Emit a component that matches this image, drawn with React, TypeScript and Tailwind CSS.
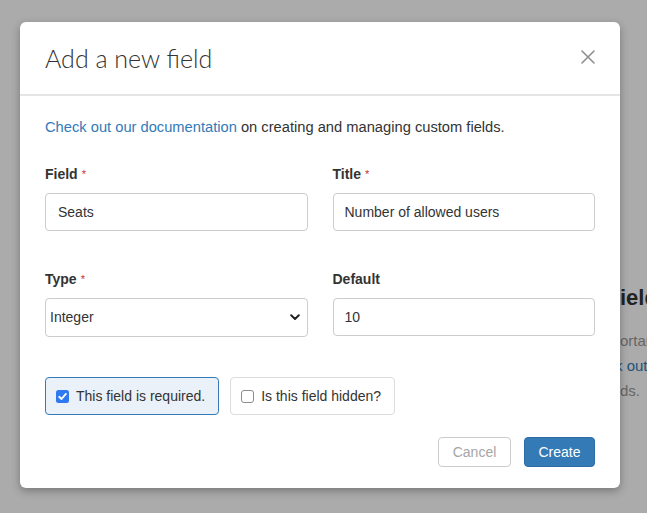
import { useState } from "react";

const Req = () => <span className="ml-[4px] text-[11px] align-top text-[#c9302c] font-normal">*</span>;

function CheckBox({ checked }: { checked: boolean }) {
  if (checked) {
    return (
      <svg width="13" height="13" viewBox="0 0 13 13" className="shrink-0">
        <rect x="0" y="0" width="13" height="13" rx="2.5" fill="#2f78f0" />
        <path d="M3.2 6.8 L5.5 9 L9.9 3.9" stroke="#fff" strokeWidth="1.9" fill="none" strokeLinecap="round" strokeLinejoin="round" />
      </svg>
    );
  }
  return (
    <svg width="13" height="13" viewBox="0 0 13 13" className="shrink-0">
      <rect x="0.5" y="0.5" width="12" height="12" rx="2.5" fill="#fff" stroke="#8c8c8c" />
    </svg>
  );
}

export default function App() {
  const [required, setRequired] = useState(true);
  const [hidden, setHidden] = useState(false);

  return (
    <div className="relative w-[647px] h-[513px] overflow-hidden bg-white font-['Liberation_Sans',Arial,sans-serif] text-[#333]">
      {/* page behind the dialog */}
      <div className="pl-[620px] pt-[284px] whitespace-nowrap">
        <div className="text-[22px] font-bold leading-[28px] text-[#333]">ields</div>
        <div className="mt-[16px] text-[15px] leading-[25px] text-[#999]">
          <div>ortant</div>
          <div className="-ml-[5px] text-[#337ab7]">k out</div>
          <div>ds.</div>
        </div>
      </div>

      {/* backdrop */}
      <div className="absolute inset-0 bg-black/[0.33]" />

      {/* dialog */}
      <div className="absolute left-[20px] top-[22px] w-[600px] rounded-[6px] bg-white shadow-[0_3px_9px_rgba(0,0,0,0.3)]">
        <div className="flex items-center justify-between h-[74px] pl-[25px] pr-[25px] border-b-2 border-[#e5e5e5]">
          <h4 className="font-['Lato',sans-serif] font-light text-[25px] text-[#333] pt-[2px]">Add a new field</h4>
          <button className="w-[14px] h-[14px] mt-[-2px]">
            <svg width="14" height="14" viewBox="0 0 14 14">
              <path d="M1 1 L13 13 M13 1 L1 13" stroke="#8f8f8f" strokeWidth="1.6" strokeLinecap="round" />
            </svg>
          </button>
        </div>

        <div className="px-[25px] pt-[21px] pb-[21px]">
          <p className="text-[14.7px] leading-[20px]">
            <a className="text-[#337ab7]">Check out our documentation</a> on creating and managing custom fields.
          </p>

          <div className="grid grid-cols-2 gap-x-[25px] gap-y-[38px] mt-[27px]">
            <div>
              <label className="block text-[14px] leading-[20px] font-bold mb-[9px]">Field<Req /></label>
              <input
                defaultValue="Seats"
                className="w-full h-[38px] px-[12px] text-[14px] border border-[#ccc] rounded-[4px] outline-none"
              />
            </div>
            <div>
              <label className="block text-[14px] leading-[20px] font-bold mb-[9px]">Title<Req /></label>
              <input
                defaultValue="Number of allowed users"
                className="w-full h-[38px] pl-[11px] pr-[12px] text-[14px] border border-[#ccc] rounded-[4px] outline-none"
              />
            </div>
            <div>
              <label className="block text-[14px] leading-[20px] font-bold mb-[9px]">Type<Req /></label>
              <div className="relative">
                <select className="w-full h-[39px] pl-[4px] pr-[24px] text-[14px] border border-[#ccc] rounded-[4px] appearance-none bg-white outline-none">
                  <option>Integer</option>
                  <option>String</option>
                  <option>Boolean</option>
                </select>
                <svg width="10" height="7" viewBox="0 0 10 7" className="absolute right-[8px] top-[16px] pointer-events-none">
                  <path d="M1.2 1.3 L5 5 L8.8 1.3" stroke="#222" strokeWidth="2" fill="none" strokeLinecap="round" strokeLinejoin="round" />
                </svg>
              </div>
            </div>
            <div>
              <label className="block text-[14px] leading-[20px] font-bold mb-[9px]">Default</label>
              <input
                defaultValue="10"
                className="w-full h-[38px] pl-[11px] pr-[12px] text-[14px] border border-[#ccc] rounded-[4px] outline-none"
              />
            </div>
          </div>

          <div className="flex gap-[11px] mt-[40px]">
            <label
              onClick={() => setRequired(!required)}
              className={
                required
                  ? "flex items-center gap-[7px] h-[38px] pl-[10px] pr-[13px] text-[14px] rounded-[4px] border border-[#337ab7] bg-[#eaf1f8] cursor-pointer"
                  : "flex items-center gap-[7px] h-[38px] pl-[10px] pr-[13px] text-[14px] rounded-[4px] border border-[#ddd] bg-white cursor-pointer"
              }
            >
              <CheckBox checked={required} />
              This field is required.
            </label>
            <label
              onClick={() => setHidden(!hidden)}
              className={
                hidden
                  ? "flex items-center gap-[7px] h-[38px] pl-[10px] pr-[13px] text-[14px] rounded-[4px] border border-[#337ab7] bg-[#eaf1f8] cursor-pointer"
                  : "flex items-center gap-[7px] h-[38px] pl-[10px] pr-[13px] text-[14px] rounded-[4px] border border-[#ddd] bg-white cursor-pointer"
              }
            >
              <CheckBox checked={hidden} />
              Is this field hidden?
            </label>
          </div>

          <div className="flex justify-end gap-[13px] mt-[22px]">
            <button className="w-[73px] h-[30px] text-[14px] text-[#a6a6a6] border border-[#ccc] rounded-[4px] bg-white">
              Cancel
            </button>
            <button className="w-[71px] h-[30px] text-[14px] text-white border border-[#2e6da4] rounded-[4px] bg-[#337ab7]">
              Create
            </button>
          </div>
        </div>
      </div>
    </div>
  );
}
